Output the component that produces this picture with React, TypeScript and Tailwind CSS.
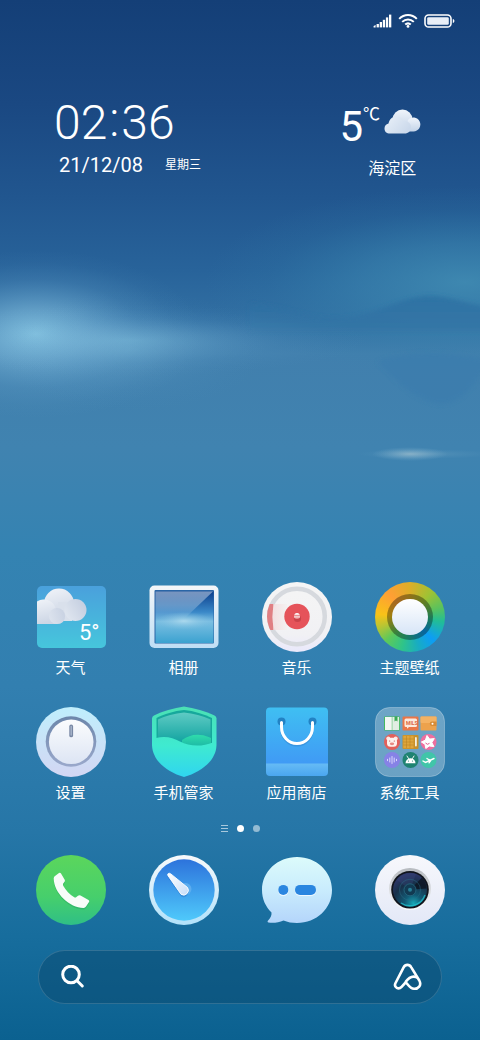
import type { ReactNode } from "react";

type AppItem = {
  name: string;
  icon: ReactNode;
};

function Wallpaper() {
  return (
    <svg
      className="absolute inset-0 h-full w-full"
      viewBox="0 0 480 1040"
      preserveAspectRatio="none"
      aria-hidden="true"
    >
      <defs>
        <linearGradient id="sky" x1="0" y1="0" x2="0" y2="1">
          <stop offset="0" stopColor="#143f77" />
          <stop offset="0.1" stopColor="#1a4882" />
          <stop offset="0.19" stopColor="#21568f" />
          <stop offset="0.26" stopColor="#28639a" />
          <stop offset="0.31" stopColor="#3270a3" />
          <stop offset="0.34" stopColor="#417fad" />
          <stop offset="0.43" stopColor="#4083b0" />
          <stop offset="0.53" stopColor="#3483b2" />
          <stop offset="0.66" stopColor="#327fb0" />
          <stop offset="0.8" stopColor="#2676a7" />
          <stop offset="0.9" stopColor="#176d9d" />
          <stop offset="1" stopColor="#0b6190" />
        </linearGradient>
        <radialGradient id="glow">
          <stop offset="0" stopColor="#8ccbe6" stopOpacity="0.9" />
          <stop offset="0.3" stopColor="#7fbbdc" stopOpacity="0.6" />
          <stop offset="0.65" stopColor="#6aa8d0" stopOpacity="0.2" />
          <stop offset="0.85" stopColor="#6aa8d0" stopOpacity="0.05" />
          <stop offset="1" stopColor="#6aa8d0" stopOpacity="0" />
        </radialGradient>
        <radialGradient id="teal">
          <stop offset="0" stopColor="#4390b5" stopOpacity="0.8" />
          <stop offset="0.4" stopColor="#3d8ab2" stopOpacity="0.5" />
          <stop offset="0.75" stopColor="#3585ae" stopOpacity="0.13" />
          <stop offset="1" stopColor="#3585ae" stopOpacity="0" />
        </radialGradient>
        <radialGradient id="spark">
          <stop offset="0" stopColor="#8fb5c9" stopOpacity="0.9" />
          <stop offset="1" stopColor="#6ea6c8" stopOpacity="0" />
        </radialGradient>
        <linearGradient id="hill" x1="0" y1="0" x2="0" y2="1">
          <stop offset="0" stopColor="#2b6fa2" />
          <stop offset="1" stopColor="#3575a6" />
        </linearGradient>
        <filter id="soft" x="-20%" y="-40%" width="140%" height="180%">
          <feGaussianBlur stdDeviation="2" />
        </filter>
      </defs>
      <rect width="480" height="1040" fill="url(#sky)" />
      <ellipse cx="465" cy="282" rx="260" ry="96" fill="url(#teal)" />
      <path
        d="M250 304 C290 306 300 318 335 318 C375 318 398 296 430 296 C450 296 465 304 500 309 V331 H250Z"
        fill="url(#hill)"
        opacity="0.75"
        filter="url(#soft)"
      />
      <path
        d="M378 362 C400 385 418 402 440 404 C460 404 470 390 490 362 C460 350 400 350 378 362Z"
        fill="#3a7cad"
        opacity="0.6"
        filter="url(#soft)"
      />
      <ellipse cx="36" cy="334" rx="165" ry="84" fill="url(#glow)" />
      <ellipse cx="130" cy="340" rx="240" ry="36" fill="url(#glow)" opacity="0.45" />
      <ellipse cx="130" cy="350" rx="140" ry="62" fill="url(#glow)" opacity="0.25" />
      <ellipse cx="410" cy="454" rx="38" ry="7" fill="url(#spark)" />
      <ellipse cx="425" cy="454" rx="68" ry="5" fill="url(#spark)" opacity="0.3" />
    </svg>
  );
}

function StatusBar() {
  return (
    <div className="flex h-[41px] items-center justify-end gap-[6px] pr-[25px] text-white">
      <svg width="20" height="14" viewBox="0 0 20 14" fill="currentColor" role="img" aria-label="信号">
        <path d="M1.600 12l2-1v2.400h-2z" />
        <rect x="4.600" y="10" width="2.300" height="3.400" />
        <rect x="7.700" y="8" width="2.300" height="5.400" />
        <rect x="10.800" y="5.800" width="2.300" height="7.600" />
        <rect x="13.900" y="3.400" width="2.300" height="10" />
        <rect x="17" y="0.600" width="2.300" height="12.800" />
      </svg>
      <svg width="20" height="14" viewBox="0 0 20 14" fill="none" stroke="currentColor" strokeWidth="2" role="img" aria-label="无线网络">
        <path d="M1.200 4.900C6.200-.3 13.800-.3 18.800 4.900" />
        <path d="M4.200 7.900c3.400-3.300 8.200-3.300 11.600 0" />
        <path d="M7.200 10.600c1.700-1.500 3.900-1.500 5.600 0" />
        <circle cx="10" cy="12.400" r="1.400" fill="currentColor" stroke="none" />
      </svg>
      <svg width="31" height="14" viewBox="0 0 31 14" role="img" aria-label="电池">
        <rect x="1" y="1" width="26" height="12" rx="3.600" fill="none" stroke="currentColor" strokeWidth="1.600" />
        <rect x="3.200" y="3.200" width="21.600" height="7.600" rx="1.400" fill="#e8eef7" />
        <path d="M28.800 5c1 .2 1.600 1 1.600 2s-.6 1.800-1.600 2z" fill="currentColor" />
      </svg>
    </div>
  );
}

function CloudIcon() {
  return (
    <svg width="37" height="25" viewBox="0 0 37 25" aria-hidden="true">
      <defs>
        <linearGradient id="cloudA" x1="0" y1="0" x2="0" y2="1">
          <stop offset="0" stopColor="#f0f5fb" />
          <stop offset="1" stopColor="#c3d3e8" />
        </linearGradient>
        <linearGradient id="cloudB" x1="0" y1="0" x2="1" y2="0.6">
          <stop offset="0" stopColor="#eaf1f9" />
          <stop offset="1" stopColor="#cbd9eb" />
        </linearGradient>
      </defs>
      <circle cx="18.500" cy="10.500" r="10" fill="url(#cloudA)" />
      <path d="M22 22.500h7.500a7 7 0 1 0-5.500-11.500z" fill="url(#cloudA)" />
      <path
        d="M6 24.500C2.500 24.500.5 22.500.5 19.500c0-2.500 1.500-4.500 4-5C5.500 10 8.500 7.500 12.500 7.500c3.500 0 6 2 7 4.500 4-.5 7.500 2 7.500 6 0 3.800-2.500 6.500-6.500 6.500z"
        fill="url(#cloudB)"
      />
    </svg>
  );
}

function ClockWeather() {
  return (
    <header className="flex items-start justify-between pt-[57px] pr-[59px] pl-[54px] text-white">
      <div>
        <time className="flex text-[48px] leading-[50px] font-light">
          <span>02</span>
          <span className="px-[2px] leading-[44px]">:</span>
          <span>36</span>
        </time>
        <div className="mt-[7px] flex items-center gap-[22px] pl-[5px]">
          <span className="text-[20px] leading-5">21/12/08</span>
          <span className="text-xs leading-5">星期三</span>
        </div>
      </div>
      <div className="flex flex-col items-center">
        <div className="flex h-[59px] items-start">
          <span className="pt-[6px] text-[42px] leading-[46px]">5</span>
          <span className="pt-[6px] text-[17px] leading-5">℃</span>
          <span className="pt-[11px] pl-1">
            <CloudIcon />
          </span>
        </div>
        <span className="pl-6 text-base leading-6">海淀区</span>
      </div>
    </header>
  );
}

function WeatherIcon() {
  return (
    <svg width="70" height="70" viewBox="0 0 70 70" className="size-[70px]" aria-hidden="true">
      <defs>
        <linearGradient id="wBg" x1="0" y1="0" x2="0" y2="1">
          <stop offset="0" stopColor="#4aa0dc" />
          <stop offset="1" stopColor="#46c6dc" />
        </linearGradient>
        <linearGradient id="wCloud" x1="0" y1="0" x2="0.3" y2="1">
          <stop offset="0" stopColor="#f1f4f9" />
          <stop offset="1" stopColor="#cdd6e5" />
        </linearGradient>
        <linearGradient id="wPuff" x1="1" y1="0.2" x2="0" y2="0.8">
          <stop offset="0" stopColor="#c3cddf" />
          <stop offset="1" stopColor="#e1e7f0" />
        </linearGradient>
        <clipPath id="wClip">
          <rect x="1" y="4" width="69" height="62" rx="5" />
        </clipPath>
      </defs>
      <rect x="1" y="4" width="69" height="62" rx="5" fill="url(#wBg)" />
      <g clipPath="url(#wClip)">
        <circle cx="23" cy="21.500" r="15" fill="url(#wCloud)" />
        <path d="M22 20h14v19H22z" fill="#d9e0eb" />
        <circle cx="39.500" cy="28" r="11" fill="url(#wPuff)" />
        <path d="M-4 42V24c3-4 8-7 12-6.500 7 .5 11 5 12 10 6-.5 9 3 9 7 0 4.500-3 7.500-8 7.500z" fill="url(#wCloud)" />
        <circle cx="21" cy="34" r="8" fill="url(#wPuff)" opacity="0.75" />
      </g>
      <text x="43" y="58" fontSize="22" fill="#fff">
        5°
      </text>
    </svg>
  );
}

function GalleryIcon() {
  return (
    <svg width="70" height="70" viewBox="0 0 70 70" className="size-[70px]" aria-hidden="true">
      <defs>
        <linearGradient id="gFrame" x1="0" y1="0" x2="0" y2="1">
          <stop offset="0" stopColor="#f4f6f8" />
          <stop offset="1" stopColor="#bfdef5" />
        </linearGradient>
        <linearGradient id="gPic" x1="0" y1="0" x2="0" y2="1">
          <stop offset="0" stopColor="#0c3f8c" />
          <stop offset="0.4" stopColor="#3a88c8" />
          <stop offset="0.58" stopColor="#7cbfe2" />
          <stop offset="1" stopColor="#3ba2d0" />
        </linearGradient>
        <linearGradient id="gShine" x1="0" y1="0" x2="0" y2="1">
          <stop offset="0" stopColor="#fff" stopOpacity="0.45" />
          <stop offset="0.5" stopColor="#fff" stopOpacity="0.28" />
          <stop offset="1" stopColor="#fff" stopOpacity="0" />
        </linearGradient>
        <radialGradient id="gGlow">
          <stop offset="0" stopColor="#b7dff0" stopOpacity="0.8" />
          <stop offset="1" stopColor="#7fc0e0" stopOpacity="0" />
        </radialGradient>
      </defs>
      <rect x="0.500" y="3.500" width="69" height="62.500" rx="5" fill="url(#gFrame)" />
      <rect x="5.500" y="8" width="59.500" height="53.500" rx="1" fill="#2a65a6" />
      <rect x="6.500" y="9.500" width="58" height="51.500" fill="url(#gPic)" />
      <ellipse cx="35" cy="39" rx="29" ry="9" fill="url(#gGlow)" />
      <path d="M6.500 9.500H64L35 37H6.500z" fill="url(#gShine)" />
    </svg>
  );
}

function MusicIcon() {
  return (
    <svg width="70" height="70" viewBox="0 0 70 70" className="size-[70px]" aria-hidden="true">
      <defs>
        <linearGradient id="mDisc" x1="0" y1="0" x2="0" y2="1">
          <stop offset="0" stopColor="#f5f5f5" />
          <stop offset="0.75" stopColor="#f1f1f4" />
          <stop offset="1" stopColor="#e9e8fb" />
        </linearGradient>
        <linearGradient id="mFade" x1="0" y1="0" x2="1" y2="0">
          <stop offset="0" stopColor="#f3d9da" />
          <stop offset="1" stopColor="#f4efef" />
        </linearGradient>
        <clipPath id="mRing">
          <circle cx="35" cy="34.500" r="30" />
        </clipPath>
      </defs>
      <circle cx="35" cy="35" r="35" fill="url(#mDisc)" />
      <circle cx="35" cy="34.500" r="27.800" fill="none" stroke="#d6d9de" strokeWidth="4.500" />
      <g clipPath="url(#mRing)">
        <path d="M5 22h7q-3 12 0 26H5z" fill="#e07f83" />
        <rect x="11" y="22" width="14" height="26" fill="url(#mFade)" opacity="0.7" />
      </g>
      <circle cx="35" cy="34.500" r="12.700" fill="#e5535a" />
      <circle cx="35.500" cy="36.500" r="3.600" fill="#b5393f" opacity="0.6" />
      <circle cx="35" cy="34" r="3" fill="#e98e91" />
      <path d="M32.300 32.800a3 3 0 0 1 5.400 0z" fill="#fff" />
      <path d="M32 34.300h6v1.200h-6z" fill="#f6dede" />
    </svg>
  );
}

function ThemeIcon() {
  return (
    <span className="flex size-[70px] items-center justify-center rounded-full bg-[conic-gradient(#dcae28,#9fc234_40deg,#5cc25c_72deg,#22bd95_98deg,#0d9df5_135deg,#19adc0_165deg,#2fc489_195deg,#5ec95a_225deg,#b3c535_250deg,#f8c218_275deg,#ff9f34_318deg,#dcae28)]">
      <span className="flex size-[46px] items-center justify-center rounded-full bg-black/35">
        <span className="size-9 rounded-full bg-linear-to-b from-white to-[#d7e5f7]" />
      </span>
    </span>
  );
}

function SettingsIcon() {
  return (
    <svg width="70" height="70" viewBox="0 0 70 70" className="size-[70px]" aria-hidden="true">
      <defs>
        <linearGradient id="sBase" x1="0" y1="0" x2="0" y2="1">
          <stop offset="0" stopColor="#bfeefc" />
          <stop offset="1" stopColor="#d3d6f3" />
        </linearGradient>
        <linearGradient id="sRing" x1="0" y1="0" x2="0" y2="1">
          <stop offset="0" stopColor="#6c86aa" />
          <stop offset="1" stopColor="#9aa8cb" />
        </linearGradient>
        <linearGradient id="sKnob" x1="0" y1="0" x2="0" y2="1">
          <stop offset="0" stopColor="#fbfcfd" />
          <stop offset="1" stopColor="#dde5f4" />
        </linearGradient>
      </defs>
      <circle cx="35" cy="35" r="35" fill="url(#sBase)" />
      <circle cx="35" cy="34.500" r="25.300" fill="url(#sRing)" />
      <circle cx="35.200" cy="34.800" r="22.300" fill="url(#sKnob)" />
      <rect x="33.300" y="17.500" width="3.800" height="12.800" rx="1.900" fill="#7787a3" />
      <rect x="34.500" y="18.700" width="1.400" height="10" rx="0.700" fill="#a9b6cb" />
    </svg>
  );
}

function SecurityIcon() {
  return (
    <svg width="70" height="70" viewBox="0 0 70 70" className="size-[70px] overflow-visible" aria-hidden="true">
      <defs>
        <linearGradient id="shBase" gradientUnits="userSpaceOnUse" x1="0" y1="0" x2="0" y2="70">
          <stop offset="0" stopColor="#4be0b4" />
          <stop offset="0.55" stopColor="#3fead0" />
          <stop offset="1" stopColor="#2fd5f0" />
        </linearGradient>
        <linearGradient id="shGlass" x1="0" y1="0" x2="0" y2="1">
          <stop offset="0" stopColor="#5fcbc4" />
          <stop offset="1" stopColor="#10a3a0" />
        </linearGradient>
        <linearGradient id="shWave" x1="0" y1="0" x2="0" y2="1">
          <stop offset="0" stopColor="#2fdcab" />
          <stop offset="1" stopColor="#1db8a6" />
        </linearGradient>
      </defs>
      <path
        d="M35 -0.500C45 1 57 4.500 65.500 8.500q2 1 2 3V38C67 54 52 65 35 70 18 65 3.500 54 3 38V11.500q0-2 2-3C13 4.500 25 1 35-.5z"
        fill="url(#shBase)"
      />
      <path d="M35 3C45 4 55 7 63 11v26H7.500V11C15 7 25 4 35 3z" fill="#17a89c" />
      <path d="M35 5.500C44 6.500 54 9 61.500 12.500V36H9V12.500C16 9 26 6.500 35 5.500z" fill="url(#shGlass)" />
      <path d="M33 33c6-4 12-6 18-5 5 0 8 2 11 3v9H33z" fill="url(#shWave)" />
      <path
        d="M7 31c9-2.500 17-.5 24 3.500 9 5 22 5.500 33 1V44H7z"
        fill="url(#shBase)"
      />
    </svg>
  );
}

function StoreIcon() {
  return (
    <svg width="70" height="70" viewBox="0 0 70 70" className="size-[70px]" aria-hidden="true">
      <defs>
        <linearGradient id="stBag" x1="0" y1="0" x2="0" y2="1">
          <stop offset="0" stopColor="#3fbff2" />
          <stop offset="1" stopColor="#409af5" />
        </linearGradient>
        <linearGradient id="stFold" x1="0" y1="0" x2="0" y2="1">
          <stop offset="0" stopColor="#66bbf5" />
          <stop offset="1" stopColor="#4aa6f0" />
        </linearGradient>
      </defs>
      <path d="M8 .5h54a4 4 0 0 1 4 4V57H4V4.500a4 4 0 0 1 4-4z" fill="url(#stBag)" />
      <path d="M4 56.500h62V65a4 4 0 0 1-4 4H8a4 4 0 0 1-4-4z" fill="url(#stFold)" />
      <circle cx="19.500" cy="14.500" r="4" fill="#2282c4" />
      <circle cx="50.500" cy="14.500" r="4" fill="#2282c4" />
      <path d="M19.500 17v4.500a15.500 16.500 0 0 0 31 0V17" fill="none" stroke="#2c80c9" strokeWidth="3" opacity="0.45" />
      <path d="M19.500 15.500v4.500a15.500 16.500 0 0 0 31 0v-4.500" fill="none" stroke="#fff" strokeWidth="3" strokeLinecap="round" />
    </svg>
  );
}

function FolderIcon() {
  return (
    <svg width="70" height="70" viewBox="0 0 70 70" className="size-[70px]" aria-hidden="true">
      <rect x="0.500" y="0.500" width="69" height="69" rx="14" fill="#fff" fillOpacity="0.3" stroke="#fff" strokeOpacity="0.28" />
      {/* notes */}
      <rect x="9" y="9.500" width="16" height="14" rx="1" fill="#44b95f" />
      <rect x="10" y="10" width="6.800" height="13" fill="#f2f6f2" />
      <rect x="17.300" y="10" width="6.800" height="13" fill="#e1eee3" />
      <path d="M19.500 9.500h3v5l-1.500-1-1.500 1z" fill="#3aa957" />
      {/* video */}
      <rect x="27.500" y="9.500" width="16" height="14" rx="1" fill="#ea7648" />
      <path d="M31 11.500h9.500a1.500 1.500 0 0 1 1.500 1.500v5.500a1.500 1.500 0 0 1-1.500 1.500H34l-2 1.800V20h-1a1.500 1.500 0 0 1-1.500-1.500V13a1.500 1.500 0 0 1 1.500-1.500z" fill="#fbe9df" />
      <text x="31" y="18" fontSize="5" fontWeight="700" fill="#dd6a40">
        MILS
      </text>
      {/* wallet */}
      <rect x="45.500" y="9.500" width="16" height="14" rx="1" fill="#eda24c" />
      <rect x="45.500" y="9.500" width="16" height="6.500" rx="1" fill="#f4b263" />
      <path d="M61.500 14.500h-4.500a2.200 2.200 0 0 0 0 4.400h4.500z" fill="#d98c36" />
      <circle cx="57.500" cy="16.700" r="1" fill="#fff" />
      {/* bear */}
      <circle cx="17" cy="35" r="8" fill="#e2605b" />
      <circle cx="13.300" cy="31.500" r="2" fill="#fbe7e3" />
      <circle cx="20.700" cy="31.500" r="2" fill="#fbe7e3" />
      <rect x="12" y="30.800" width="10" height="9" rx="3.500" fill="#fdf1ee" />
      <ellipse cx="17" cy="36.800" rx="2.200" ry="1.400" fill="#e88a84" />
      <circle cx="14.700" cy="34" r="0.600" fill="#b9443f" />
      <circle cx="19.300" cy="34" r="0.600" fill="#b9443f" />
      {/* calculator */}
      <rect x="27.500" y="28" width="16" height="14" rx="1" fill="#c8902a" />
      <rect x="28.300" y="28.800" width="10.200" height="12.400" fill="#dfa63c" />
      <path d="M31.500 29v12M35 29v12M28.300 32h10.200M28.300 35h10.200M28.300 38h10.200" stroke="#b57f22" strokeWidth="0.500" />
      <rect x="40" y="30" width="1.800" height="9.500" rx="0.900" fill="#f6efdd" />
      {/* star */}
      <circle cx="53.500" cy="35" r="8" fill="#ef6f9f" />
      <path d="M52 28.500l2.600 3.600 4.700-.5-2.400 4 2 4-4.700-.6-3.400 2.500-.8-4.200-3.600-2.300 4-1.900z" fill="#fff" stroke="#fff" strokeWidth="1" strokeLinejoin="round" />
      <path d="M50.500 36q2 2.500 4 .3" fill="none" stroke="#e25a8e" strokeWidth="1" />
      {/* recorder */}
      <circle cx="17" cy="53" r="8" fill="#8682e6" />
      <path d="M12.500 52.300v1.400M14.800 51v4M17 49.500v7M19.200 51v4M21.500 52.300v1.400" stroke="#d9d7fb" strokeWidth="1" strokeLinecap="round" />
      {/* android */}
      <circle cx="35.500" cy="53" r="8" fill="#1f8372" />
      <path d="M30.500 56.200a5 5 0 0 1 10 0z" fill="#fff" />
      <path d="M32 49l1.500 2.500M39 49l-1.500 2.500" stroke="#fff" strokeWidth="0.900" strokeLinecap="round" />
      <circle cx="33.500" cy="54" r="0.600" fill="#1f8372" />
      <circle cx="37.500" cy="54" r="0.600" fill="#1f8372" />
      {/* travel */}
      <circle cx="53.500" cy="53" r="8" fill="#41c5a9" />
      <path d="M48 54l2.500 1.400L59 51.500M52 51.500l3 2M54 55.800l1.500-2" fill="none" stroke="#fff" strokeWidth="1.400" strokeLinecap="round" />
    </svg>
  );
}

function PhoneIcon() {
  return (
    <svg width="70" height="70" viewBox="0 0 70 70" className="size-[70px]" aria-hidden="true">
      <defs>
        <linearGradient id="pBg" x1="0" y1="0" x2="0" y2="1">
          <stop offset="0" stopColor="#5bd65c" />
          <stop offset="0.6" stopColor="#46cf6c" />
          <stop offset="1" stopColor="#2fbf86" />
        </linearGradient>
      </defs>
      <circle cx="35" cy="35" r="35" fill="url(#pBg)" />
      <path
        d="M19 22.500l4-3q1.300-.8 2 .5l3.700 6.200q.7 1.300-.3 2.400l-1.200 1.500q-.6 1 0 2.200c2.500 4.600 6.500 8.700 11 11.500q1.200.7 2.200-.2l1.600-1.300q1.200-1 2.500-.2l8 4.500q1.300.8.500 2l-3 4.400q-.8 1.300-2.400 1.400C34 54.500 18 40 17.700 25q0-1.600 1.300-2.500z"
        fill="#148a4a"
        opacity="0.25"
      />
      <path
        d="M19 21l4-3q1.300-.8 2 .5l3.700 6.200q.7 1.300-.3 2.400l-1.200 1.500q-.6 1 0 2.200c2.500 4.600 6.500 8.700 11 11.500q1.200.7 2.200-.2l1.600-1.300q1.200-1 2.500-.2l8 4.500q1.300.8.500 2l-3 4.400q-.8 1.300-2.400 1.400C34 53 18 38.500 17.700 23.500q0-1.600 1.300-2.500z"
        fill="#f8fcf9"
      />
    </svg>
  );
}

function BrowserIcon() {
  return (
    <svg width="70" height="70" viewBox="0 0 70 70" className="size-[70px]" aria-hidden="true">
      <defs>
        <linearGradient id="bRim" x1="0" y1="0" x2="0" y2="1">
          <stop offset="0" stopColor="#f8f9fb" />
          <stop offset="1" stopColor="#b2e2fa" />
        </linearGradient>
        <linearGradient id="bFace" x1="0" y1="0" x2="0" y2="1">
          <stop offset="0" stopColor="#2d73dc" />
          <stop offset="1" stopColor="#4fc9fb" />
        </linearGradient>
        <linearGradient id="bNeedle" x1="0" y1="0" x2="1" y2="1">
          <stop offset="0" stopColor="#fff" />
          <stop offset="1" stopColor="#c6ddf8" />
        </linearGradient>
      </defs>
      <circle cx="35" cy="35" r="35" fill="url(#bRim)" />
      <circle cx="35" cy="35" r="30.700" fill="url(#bFace)" />
      <circle cx="36.500" cy="34" r="6" fill="#64b1f0" opacity="0.8" />
      <path d="M19.300 20.500q1-.7 2.500.4L38.500 34.500a4.800 4.800 0 0 1-6.500 6.800L19 22.700q-.9-1.400.3-2.200z" fill="#1c5cb5" opacity="0.3" />
      <path d="M19.300 18.500q1-.7 2.500.4L38.500 32.500a4.800 4.800 0 0 1-6.500 6.800L19 20.700q-.9-1.400.3-2.200z" fill="url(#bNeedle)" stroke="#fff" strokeWidth="0.900" />
    </svg>
  );
}

function MessagesIcon() {
  return (
    <svg width="70" height="70" viewBox="0 0 70 70" className="size-[70px]" aria-hidden="true">
      <defs>
        <linearGradient id="msBg" x1="0" y1="0" x2="0" y2="1">
          <stop offset="0" stopColor="#dcfbfb" />
          <stop offset="0.5" stopColor="#c9ecfd" />
          <stop offset="1" stopColor="#b4d5fb" />
        </linearGradient>
      </defs>
      <path
        d="M35 2C54.500 2 70 16.500 70 35S54.500 68 35 68c-5 0-9.500-.8-13.500-2.500C17 67.500 11 68.300 6.500 67.500c-1-.2-1.200-1-.6-1.700C8.500 63 9.800 60.500 9.500 57.500 3.500 51.500 0 44 0 35 0 16.500 15.500 2 35 2z"
        fill="url(#msBg)"
      />
      <circle cx="21.300" cy="35.800" r="5.200" fill="#eef8ff" />
      <circle cx="21.300" cy="34.900" r="5" fill="#2a86e0" />
      <rect x="32.800" y="30.800" width="21.400" height="10.200" rx="5.100" fill="#eef8ff" />
      <rect x="33" y="29.900" width="21" height="10" rx="5" fill="#2a86e0" />
    </svg>
  );
}

function CameraIcon() {
  return (
    <svg width="70" height="70" viewBox="0 0 70 70" className="size-[70px]" aria-hidden="true">
      <defs>
        <linearGradient id="cBody" x1="0" y1="0" x2="0" y2="1">
          <stop offset="0" stopColor="#f7f8fc" />
          <stop offset="1" stopColor="#e3e8f7" />
        </linearGradient>
        <linearGradient id="cRim" x1="0" y1="0" x2="0" y2="1">
          <stop offset="0" stopColor="#b6babf" />
          <stop offset="1" stopColor="#fafbfd" />
        </linearGradient>
        <radialGradient id="cLens" cx="0.600" cy="0.900" r="0.850">
          <stop offset="0" stopColor="#17a6b5" />
          <stop offset="0.300" stopColor="#125a75" />
          <stop offset="0.700" stopColor="#173049" />
          <stop offset="1" stopColor="#2b3566" />
        </radialGradient>
      </defs>
      <circle cx="35" cy="35" r="35" fill="url(#cBody)" />
      <circle cx="35" cy="34" r="21" fill="url(#cRim)" />
      <circle cx="35" cy="34.800" r="18.800" fill="#11151d" />
      <circle cx="35" cy="34.800" r="17" fill="url(#cLens)" />
      <path d="M35 34.800L47 22.500a17 17 0 0 1 4.500 11z" fill="#0c1420" opacity="0.800" />
      <path d="M22 25a16.500 16.500 0 0 1 19-6L35 34.800z" fill="#39477c" opacity="0.350" />
      <circle cx="35" cy="34.800" r="10.500" fill="none" stroke="#2c7288" strokeWidth="1" opacity="0.450" />
      <circle cx="35" cy="34.800" r="6" fill="#123a52" stroke="#276a82" strokeWidth="0.800" />
      <circle cx="35" cy="34.800" r="2" fill="#287e95" />
      <path d="M26 48a16 16 0 0 0 24-8" fill="none" stroke="#23c8d2" strokeWidth="1.500" opacity="0.700" />
    </svg>
  );
}

const apps: AppItem[] = [
  { name: "天气", icon: <WeatherIcon /> },
  { name: "相册", icon: <GalleryIcon /> },
  { name: "音乐", icon: <MusicIcon /> },
  { name: "主题壁纸", icon: <ThemeIcon /> },
  { name: "设置", icon: <SettingsIcon /> },
  { name: "手机管家", icon: <SecurityIcon /> },
  { name: "应用商店", icon: <StoreIcon /> },
  { name: "系统工具", icon: <FolderIcon /> },
];

const dock: AppItem[] = [
  { name: "电话", icon: <PhoneIcon /> },
  { name: "浏览器", icon: <BrowserIcon /> },
  { name: "短信", icon: <MessagesIcon /> },
  { name: "相机", icon: <CameraIcon /> },
];

function PageIndicator() {
  return (
    <div className="flex h-[10px] items-center justify-center gap-[9px]">
      <svg width="7" height="7" viewBox="0 0 7 7" stroke="#fff" strokeOpacity="0.6" aria-hidden="true">
        <path d="M0 .5h7M0 3.500h7M0 6.500h7" />
      </svg>
      <span className="size-[7px] rounded-full bg-white" />
      <span className="size-[7px] rounded-full bg-white/50" />
    </div>
  );
}

function SearchBar() {
  return (
    <form className="mx-[38px] flex h-[54px] items-center rounded-full border border-white/15 bg-[#0a4a70]/50 pr-[18px] pl-[22px] text-white">
      <button type="submit" aria-label="搜索" className="shrink-0">
        <svg width="24" height="24" viewBox="0 0 24 24" fill="none" stroke="currentColor" strokeWidth="3" strokeLinecap="round">
          <circle cx="10" cy="9.500" r="8.300" />
          <path d="M16.300 16l5 5" />
        </svg>
      </button>
      <input type="text" aria-label="搜索内容" className="h-full min-w-0 flex-1 bg-transparent px-3 text-base outline-none" />
      <button type="button" aria-label="语音助手" className="shrink-0">
        <svg width="30" height="28" viewBox="0 0 30 28" fill="none" stroke="currentColor" strokeWidth="2.600" strokeLinejoin="round">
          <path d="M13.500 18.500L8.600 23.800C5.600 27 .8 24.500 2.300 20.500L10.600 4.300C12.300 1 16.500 1 18.300 4.300L26.300 17.500C29 22.500 25 26.100 21 25.800 17.500 25.500 16 23 13.500 20" />
          <path d="M12.500 19C16 14 20 12.300 24.500 14.500" />
        </svg>
      </button>
    </form>
  );
}

export default function App() {
  return (
    <main className="relative flex min-h-screen flex-col overflow-hidden bg-[#327fb0] font-[Roboto,'Noto_Sans_CJK_SC',sans-serif]">
      <Wallpaper />
      <div className="relative flex flex-1 flex-col pb-9">
        <StatusBar />
        <ClockWeather />

        <div className="mt-auto grid grid-cols-4 gap-y-[26px] px-[14px]">
          {apps.map((app) => (
            <button key={app.name} type="button" className="flex flex-col items-center gap-1">
              {app.icon}
              <span className="text-[15px] leading-[25px] whitespace-nowrap text-white">{app.name}</span>
            </button>
          ))}
        </div>

        <div className="mt-[17px]">
          <PageIndicator />
        </div>

        <nav className="mt-[22px] mb-[25px] grid grid-cols-4 px-[14px]">
          {dock.map((app) => (
            <button key={app.name} type="button" aria-label={app.name} className="flex justify-center">
              {app.icon}
            </button>
          ))}
        </nav>

        <SearchBar />
      </div>
    </main>
  );
}
